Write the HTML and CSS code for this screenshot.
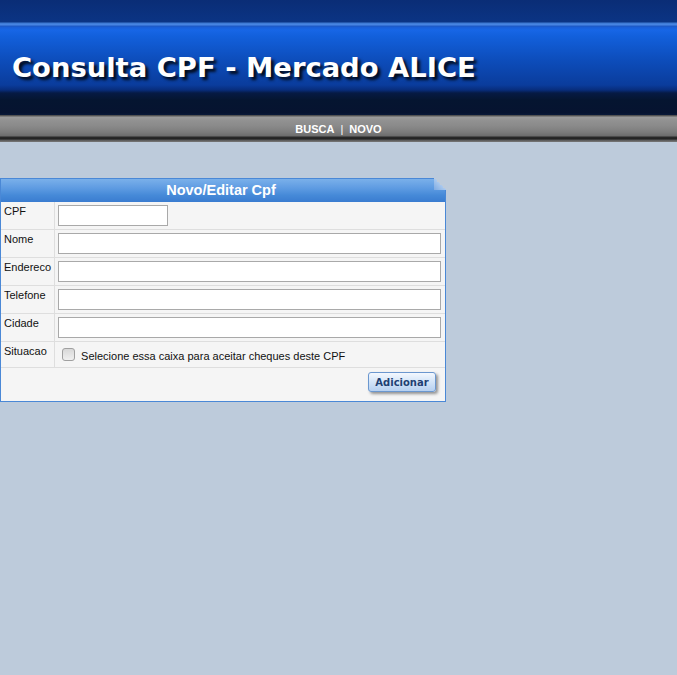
FILE: index.html
```html
<!DOCTYPE html>
<html lang="pt">
<head>
<meta charset="utf-8">
<title>Consulta CPF - Mercado ALICE</title>
<link rel="stylesheet" href="styles.css">
</head>
<body>
<header class="banner">
  <h1 class="site-title">Consulta CPF - Mercado ALICE</h1>
</header>
<nav class="menu">
  <a href="#" class="menu-link">BUSCA</a><span class="menu-sep">|</span><a href="#" class="menu-link">NOVO</a>
</nav>
<main class="content">
  <section class="panel">
    <div class="panel-head">Novo/Editar Cpf</div>
    <table class="form">
      <tr>
        <td class="lbl">CPF</td>
        <td class="fld"><input type="text" class="inp inp-short"></td>
      </tr>
      <tr>
        <td class="lbl">Nome</td>
        <td class="fld"><input type="text" class="inp"></td>
      </tr>
      <tr>
        <td class="lbl">Endereco</td>
        <td class="fld"><input type="text" class="inp"></td>
      </tr>
      <tr>
        <td class="lbl">Telefone</td>
        <td class="fld"><input type="text" class="inp"></td>
      </tr>
      <tr>
        <td class="lbl">Cidade</td>
        <td class="fld"><input type="text" class="inp"></td>
      </tr>
      <tr class="row-check">
        <td class="lbl">Situacao</td>
        <td class="fld">
          <label class="check"><input type="checkbox" class="chk"><span class="check-text">Selecione essa caixa para aceitar cheques deste CPF</span></label>
        </td>
      </tr>
      <tr class="row-actions">
        <td colspan="2" class="actions"><button type="button" class="btn">Adicionar</button></td>
      </tr>
    </table>
  </section>
</main>
</body>
</html>
```

FILE: styles.css
```css
html, body {
  margin: 0;
  padding: 0;
}
body {
  background: #bdcbdb;
  font-family: "Liberation Sans", Arial, sans-serif;
  min-height: 675px;
}
.banner {
  height: 115px;
  box-sizing: border-box;
  padding: 52px 0 0 12px;
  background: linear-gradient(to bottom,
    #0a2d76 0px, #0b3484 22px,
    #3c78d0 23px, #4a88e8 25px, #1e58c0 26px, #1a5ed6 27px,
    #1766e6 30px, #1260dc 36px, #0d4dbb 60px, #0a3c9c 85px,
    #082d7c 90px, #061a44 93px, #051530 100px, #061330 113px, #0a1a3a 115px);
}
.site-title {
  margin: 0;
  font-family: "DejaVu Sans", Verdana, sans-serif;
  font-weight: bold;
  font-size: 27.4px;
  line-height: 32px;
  letter-spacing: 0;
  color: #ffffff;
  text-shadow: 3px 3px 3px rgba(0, 0, 0, 0.85);
}
.menu {
  height: 27px;
  display: flex;
  justify-content: center;
  align-items: center;
  gap: 6px;
  background: linear-gradient(to bottom,
    #4a4a4a 0px, #5a5a5a 1px, #9c9c9c 2px, #929292 5px, #8a8a8a 11px,
    #7c7c7c 17px, #6c6c6c 21px, #2a2a2a 22px, #222 24px, #555 25px, #7a7a7a 27px);
  font-size: 11px;
  font-weight: bold;
}
.menu-link {
  color: #ffffff;
  text-decoration: none;
}
.menu-sep {
  color: #ffffff;
  font-weight: normal;
}
.content {
  padding-top: 36px;
}
.panel {
  width: 444px;
  border: 1px solid #4a88d6;
  background: #f5f5f5;
  position: relative;
}
.panel-head {
  height: 23px;
  line-height: 22px;
  padding-right: 4px;
  text-align: center;
  color: #ffffff;
  font-weight: bold;
  font-size: 14.5px;
  background: linear-gradient(to bottom, #7ab0ea 0%, #5e9be2 40%, #468ad8 70%, #3a7cd0 100%);
}
.panel::after {
  content: "";
  position: absolute;
  top: -1px;
  right: -1px;
  width: 12px;
  height: 12px;
  background: linear-gradient(to bottom left, #bdcbdb 50%, #a9c8ee 50%, #7eaae2 100%);
}
.form {
  width: 100%;
  border-collapse: collapse;
  font-size: 11px;
  color: #111;
}
.form td {
  border-bottom: 1px solid #dedede;
  padding: 3px;
  vertical-align: top;
  line-height: 13px;
}
.lbl {
  width: 47px;
  border-right: 1px solid #dedede;
}
.inp {
  display: block;
  box-sizing: border-box;
  width: 383px;
  height: 21px;
  margin: 0;
  border: 1px solid #a9a9a9;
  background: #fff;
  padding: 0 3px;
}
.inp-short {
  width: 110px;
}
.row-check td {
  height: 19px;
}
.check {
  display: flex;
  align-items: flex-start;
}
.chk {
  appearance: none;
  -webkit-appearance: none;
  width: 13px;
  height: 13px;
  margin: 3px 0 0 4px;
  border: 1px solid #a0a0a0;
  border-radius: 3px;
  background: linear-gradient(to bottom, #d8d8d8, #f0f0f0);
  box-sizing: border-box;
}
.check-text {
  margin: 5px 0 0 6px;
}
.row-actions td {
  border-bottom: none;
  padding: 4px 9px 9px 0;
  text-align: right;
}
.btn {
  width: 68px;
  height: 20px;
  padding: 0;
  border: 1px solid #6b97cf;
  border-radius: 3px;
  background: linear-gradient(to bottom, #f4f8fe 0%, #d6e6f8 45%, #b6d0f0 100%);
  color: #1f3f72;
  font-family: "DejaVu Sans", Verdana, sans-serif;
  font-weight: bold;
  font-size: 10px;
  box-shadow: 2px 2px 3px rgba(0, 0, 0, 0.4);
}
```
